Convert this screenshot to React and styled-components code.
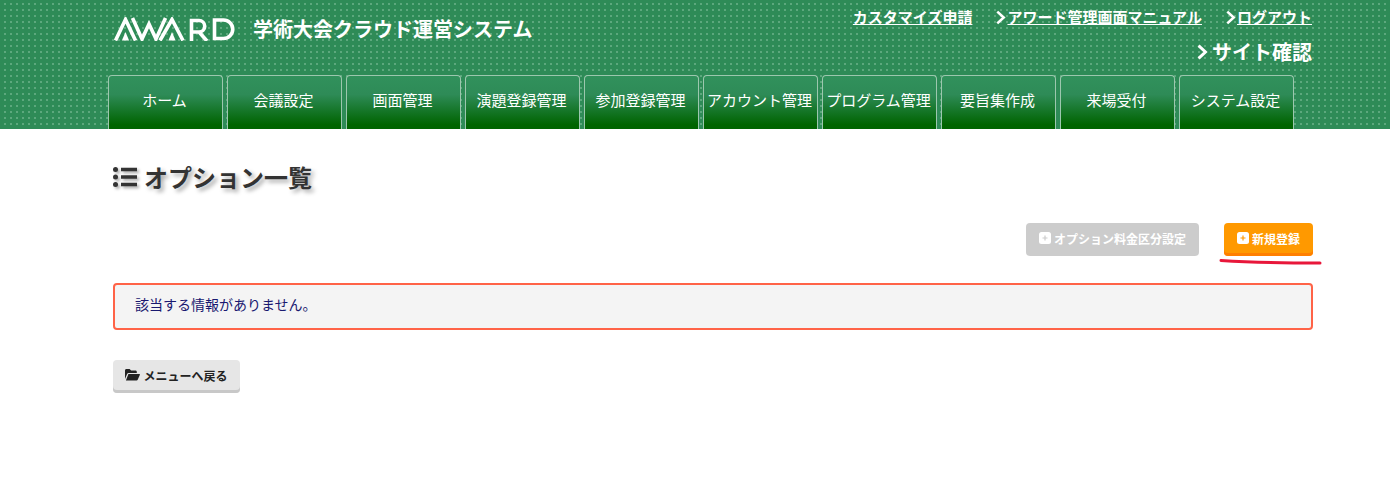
import React from "react";
import styled, { createGlobalStyle } from "styled-components";

const Global = createGlobalStyle`
  html, body { margin: 0; padding: 0; background: #fff; }
  body { font-family: "Noto Sans CJK JP", "Noto Sans", sans-serif; color: #333; }
`;
const Header = styled.header`
  height: 129px;
  background-color: #2e8b57;
  background-image: conic-gradient(at 2px 2px, transparent 75%, #5ca87d 0);
  background-size: 6px 6px;
  background-position: 4px 3px;
`;
const Inner = styled.div`
  width: 1200px;
  margin-left: 113px;
`;
const HeaderInner = styled(Inner)`
  height: 129px;
  display: flex;
  flex-direction: column;
`;
const Top = styled.div`
  height: 75px;
  display: flex;
  justify-content: space-between;
`;
const Brand = styled.div`
  display: flex;
  align-items: flex-start;
  gap: 17px;
  padding: 17px 0 0 1px;
`;
const Title = styled.div`
  color: #fff;
  font-size: 20px;
  font-weight: 700;
  line-height: 24px;
`;
const Links = styled.div`
  display: flex;
  flex-direction: column;
  align-items: flex-end;
  padding: 6px 1px 0 0;
`;
const LinkRow = styled.div`
  display: flex;
  gap: 22px;
  height: 22px;
  align-items: center;
`;
const HeadLink = styled.a`
  color: #fff;
  font-size: 15px;
  font-weight: 700;
  line-height: 20px;
  display: flex;
  align-items: center;
  span { text-decoration: underline; }
`;
const SiteLink = styled.a`
  color: #fff;
  font-size: 20px;
  font-weight: 700;
  line-height: 26px;
  margin-top: 11px;
  display: flex;
  align-items: center;
  gap: 3px;
`;
const Nav = styled.nav`
  display: flex;
  gap: 4px;
  align-items: flex-start;
  margin-left: -5px;
`;
const Tab = styled.a`
  width: 115px;
  height: 54px;
  box-sizing: border-box;
  padding: 0 2px 5px 0;
  display: flex;
  align-items: center;
  justify-content: center;
  color: #fff;
  font-size: 15px;
  line-height: 20px;
  white-space: nowrap;
  border: 1px solid #9cc7ae;
  border-bottom: none;
  border-radius: 4px 4px 0 0;
  background: linear-gradient(#31915c 0%, #2e8b57 35%, #006400 92%);
`;
const Heading = styled.h1`
  margin: 0 0 30px;
  padding-top: 32px;
  display: flex;
  align-items: center;
  gap: 7px;
  font-size: 24px;
  font-weight: 700;
  line-height: 32px;
  color: #333;
  text-shadow: 3px 3px 4px #aaa;
`;
const Actions = styled.div`
  display: flex;
  justify-content: flex-end;
  gap: 25px;
`;
const Btn = styled.a`
  height: 33px;
  box-sizing: border-box;
  display: flex;
  align-items: center;
  gap: 3px;
  padding: 0 13px 3px;
  border-radius: 4px;
  color: #fff;
  font-size: 12px;
  font-weight: 700;
  background: ${p => p.$bg};
  box-shadow: ${p => p.$edge ? `inset 0 -3px 0 ${p.$edge}` : "none"};
`;
const Underline = styled.svg`
  position: absolute;
  left: 1218px;
  top: 258px;
`;
const Notice = styled.div`
  margin-top: 27px;
  height: 47px;
  box-sizing: border-box;
  border: 2px solid #ff6347;
  border-radius: 4px;
  background: #f4f4f4;
  color: #191970;
  font-size: 14px;
  line-height: 20px;
  padding: 9px 20px;
`;
const Back = styled.a`
  margin-top: 30px;
  width: 127px;
  height: 33px;
  box-sizing: border-box;
  padding-bottom: 3px;
  display: flex;
  align-items: center;
  justify-content: center;
  gap: 3px;
  border-radius: 4px;
  background: #e6e6e6;
  box-shadow: inset 0 -3px 0 #c8c8c8;
  color: #222;
  font-size: 12px;
  font-weight: 700;
`;

const Chevron = ({ size = 13, w = 2.4 }) => (
  <svg width={size} height={size + 2} viewBox="0 0 12 14" style={{ flex: "none" }}>
    <path d="M3 1.5 9 7 3 12.5" fill="none" stroke="#fff" strokeWidth={w} />
  </svg>
);
const Plus = ({ color }) => (
  <svg width="12" height="12" viewBox="0 0 12 12" style={{ flex: "none" }}>
    <rect width="12" height="12" rx="2.5" fill="#fff" />
    <path d="M3.5 6h5M6 3.5v5" stroke={color} strokeWidth="1.2" />
  </svg>
);
const ListIcon = () => (
  <svg width="24" height="22" viewBox="0 0 24 22" style={{ filter: "drop-shadow(2px 2px 1.5px #aaa)" }}>
    <circle cx="2.5" cy="3.5" r="2.5" fill="#333" /><circle cx="2.5" cy="11" r="2.5" fill="#333" /><circle cx="2.5" cy="18.5" r="2.5" fill="#333" />
    <path d="M8 3.5h16M8 11h16M8 18.5h16" stroke="#333" strokeWidth="3.4" />
  </svg>
);
const FolderIcon = () => (
  <svg width="15" height="12" viewBox="0 0 15 12">
    <path d="M0 10V1.5C0 .7.6 0 1.4 0h3.2l1.5 1.6h4.4c.8 0 1.3.6 1.3 1.3V4H3.6c-.7 0-1.2.3-1.5.9L0 10Z" fill="#222" />
    <path d="M3.4 5h11c.4 0 .7.4.5.8l-2.2 5c-.2.5-.6.8-1.1.8H.9L3.4 5Z" fill="#222" />
  </svg>
);
const Logo = () => (
  <svg width="122" height="24" viewBox="0 0 122 24" fill="none" stroke="#fff" strokeWidth="3.6" style={{ flex: "none" }}>
    <path d="M1.5 23.5 11.5 2.5 21.5 23.5" />
    <path d="M11.5 15l-3.6 8.5h7.2Z" fill="#fff" stroke="none" />
    <path d="M18.5 1 28 22 35 7 42 22 51.5 1" />
    <path d="M46 23.5 58 2.5 69 23.5" />
    <path d="M58 15l-3.6 8.5h7.2Z" fill="#fff" stroke="none" />
    <path d="M77.5 24V3.5h7.5a5.5 5.5 0 0 1 0 11.5h-7.5M85 15 93 24" />
    <path d="M100.5 3v18.5h9a9.25 9.25 0 0 0 0-18.5Z" />
  </svg>
);

const tabs = ["ホーム", "会議設定", "画面管理", "演題登録管理", "参加登録管理", "アカウント管理", "プログラム管理", "要旨集作成", "来場受付", "システム設定"];

export default function App() {
  return (
    <>
      <Global />
      <Header>
        <HeaderInner>
          <Top>
            <Brand>
              <Logo />
              <Title>学術大会クラウド運営システム</Title>
            </Brand>
            <Links>
              <LinkRow>
                <HeadLink><span>カスタマイズ申請</span></HeadLink>
                <HeadLink><Chevron /><span>アワード管理画面マニュアル</span></HeadLink>
                <HeadLink><Chevron /><span>ログアウト</span></HeadLink>
              </LinkRow>
              <SiteLink><Chevron size={14} w={2.6} />サイト確認</SiteLink>
            </Links>
          </Top>
          <Nav>
            {tabs.map(t => <Tab key={t}>{t}</Tab>)}
          </Nav>
        </HeaderInner>
      </Header>
      <Inner>
        <Heading><ListIcon />オプション一覧</Heading>
        <Actions>
          <Btn $bg="#cccccc"><Plus color="#ccc" />オプション料金区分設定</Btn>
          <Btn $bg="#ff9900" $edge="#ff7f00"><Plus color="#f90" />新規登録</Btn>
        </Actions>
        <Underline width="106" height="8" viewBox="0 0 106 8">
          <path d="M3 2.5C35 4.5 70 5 102 5" stroke="#e8173a" strokeWidth="3" fill="none" strokeLinecap="round" />
        </Underline>
        <Notice>該当する情報がありません。</Notice>
        <Back><FolderIcon />メニューへ戻る</Back>
      </Inner>
    </>
  );
}
